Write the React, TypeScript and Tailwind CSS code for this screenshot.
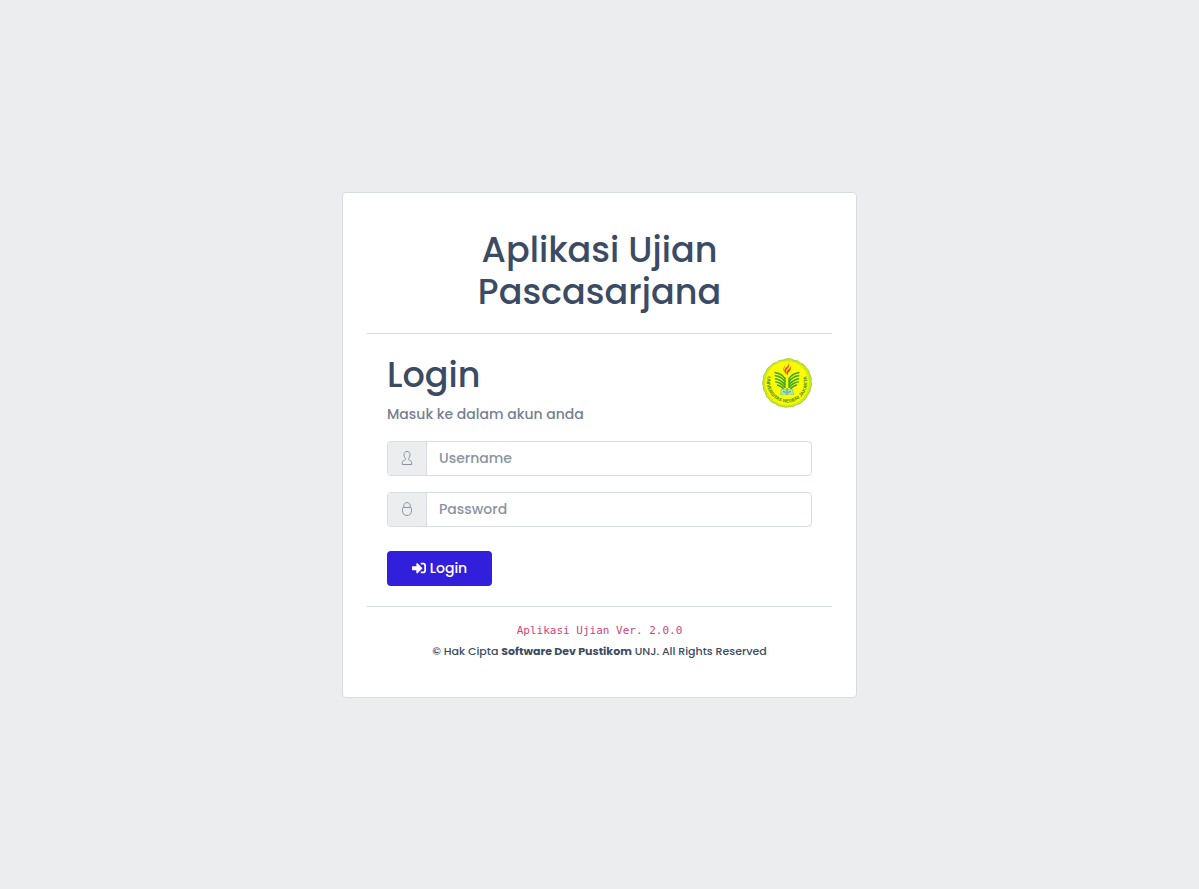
import type { ReactNode } from "react";
import { FaSignInAlt } from "react-icons/fa";

function UserIcon() {
  return (
    <svg width="14" height="14" viewBox="0 0 14 14" fill="none" stroke="currentColor" strokeLinejoin="round" aria-hidden="true">
      <path d="M7 .5C5.100.5 4 1.700 4 3.700c0 1.700.6 2.900 1.500 3.700v.9c0 .7-.7.900-1.500 1.200-1.100.5-1.700 1.100-1.700 2.300v1.700h9.400v-1.700c0-1.200-.6-1.800-1.700-2.300-.8-.3-1.500-.5-1.500-1.200v-.9C9.400 6.600 10 5.400 10 3.700 10 1.700 8.900.5 7 .5Z" />
    </svg>
  );
}

function LockIcon() {
  return (
    <svg width="14" height="14" viewBox="0 0 14 14" fill="none" stroke="currentColor" strokeLinejoin="round" aria-hidden="true">
      <path d="M3.500 5.500h7c.6 0 1 .4 1 1v2.200c0 2.900-1.800 4.800-4.500 4.800s-4.500-1.900-4.500-4.800V6.500c0-.6.4-1 1-1Z" />
      <path d="M3.800 5.500V3.900C3.800 1.900 5.100.5 7 .5s3.200 1.400 3.200 3.400v1.600" />
    </svg>
  );
}

function Pages() {
  return (
    <>
      <path d="M12.500 14.500Q20 15.500 22.700 20.500" />
      <path d="M12.700 17.600Q20 18.600 22.900 24" />
      <path d="M12.900 20.700Q19.500 21.600 22.900 27" />
      <path d="M13.200 23.800Q19 24.500 22.600 29.500" />
      <path d="M15 27Q19 27.600 21.500 31" />
      <path d="M22.900 19.500V30" />
    </>
  );
}

function Logo() {
  return (
    <svg viewBox="0 0 50 50" className="mt-1 size-[50px] shrink-0" role="img" aria-label="Universitas Negeri Jakarta">
      <path
        d="M25 .7Q29 .2 32 2.300Q36 2.300 38.600 5Q42.500 6 44 9.500Q47.500 12 47.500 16Q50 19.500 49 23.200Q50.300 27 48.400 30.500Q48.500 34.500 45.500 37.200Q44.500 41.200 41 42.800Q38.500 46.300 34.500 46.600Q31 49.500 27 48.800Q23.500 50 20 48.300Q16 48.500 13.200 45.500Q9 45 7.300 41.300Q3.800 39 3.600 35Q.8 32 1.300 28.200Q-.3 24.500 1.600 21Q1 17 3.800 14.200Q4.500 10 8.200 8.200Q10.500 4.800 14.500 4.500Q17.500 1.500 21.200 2Z"
        fill="#cfea1c"
        stroke="#a9d02c"
        strokeWidth="1"
      />
      <circle cx="25" cy="25" r="21.800" fill="#fbfb06" />
      <g fill="none" stroke="#3fa62d" strokeWidth="1.500">
        <Pages />
        <g transform="translate(50 0) scale(-1 1)">
          <Pages />
        </g>
      </g>
      <path d="M19.500 31.500Q22.500 30.500 25 32Q27.500 30.500 30.500 31.500L31.500 36.500Q27.500 35.300 25 36.800Q22.500 35.300 18.500 36.500Z" fill="#a9e8c8" stroke="#5fbfa0" strokeWidth=".6" />
      <path d="M25 30V36.500M21 33.500L24 34.300M26 34.300L29 33.500" stroke="#3a8fa0" strokeWidth=".9" />
      <path d="M26.500 4Q27.500 7 24 9.500Q20.500 12.500 24 16.500Q23 12.500 26 10Q28 7.500 26.500 4Z" fill="#ee4a1e" />
      <path d="M28.300 8Q30 12 26.500 14.200Q25.500 15.500 26 17.500Q22.500 14.500 26 12Q28.300 10.500 28.300 8Z" fill="#e94920" />
      <path d="M23 7.500Q20.500 10.500 22 13.500Q21.800 10.500 23 7.500Z" fill="#ee4a1e" />
      <path id="logo-ring" d="M6 17.500A20.200 20.200 0 1 0 44 17.500" fill="none" />
      <text fill="#3f8c22" fontSize="4.800" fontWeight="700" fontFamily="Liberation Sans, sans-serif">
        <textPath href="#logo-ring" startOffset="50%" textAnchor="middle">
          UNIVERSITAS NEGERI JAKARTA
        </textPath>
      </text>
    </svg>
  );
}

type FieldProps = {
  id: string;
  label: string;
  type: string;
  icon: ReactNode;
};

function Field({ id, label, type, icon }: FieldProps) {
  return (
    <div className="flex h-[35px] overflow-hidden rounded border border-[#d8dbe0] bg-white">
      <label htmlFor={id} aria-label={label} className="flex w-[39px] shrink-0 items-center justify-center border-r border-[#d8dbe0] bg-[#ebedef] text-[#8a93a2]">
        {icon}
      </label>
      <input
        id={id}
        type={type}
        placeholder={label}
        className="min-w-0 flex-1 px-3 text-sm font-medium text-[#768192] outline-none placeholder:text-[#8a93a2]"
      />
    </div>
  );
}

export default function App() {
  return (
    <main className="flex min-h-screen items-center justify-center bg-[#ebedef] px-4 font-['Poppins','Inter',sans-serif] text-sm text-[#3c4b64]">
      <section className="w-full max-w-[515px] rounded border border-[#d8dbe0] bg-white px-6 pt-9 pb-[35px]">
        <h1 className="px-5 text-center text-[35px] leading-[42px] font-medium">Aplikasi Ujian Pascasarjana</h1>
        <form className="mt-5 border-y border-[#d8dbe0] p-5" onSubmit={(event) => event.preventDefault()}>
          <div className="flex items-start justify-between">
            <div>
              <h2 className="text-[35px] leading-[42px] font-medium">Login</h2>
              <p className="mt-2 leading-[21px] font-medium text-[#768192]">Masuk ke dalam akun anda</p>
            </div>
            <Logo />
          </div>
          <div className="mt-4 flex flex-col gap-4">
            <Field id="username" label="Username" type="text" icon={<UserIcon />} />
            <Field id="password" label="Password" type="password" icon={<LockIcon />} />
          </div>
          <button type="submit" className="mt-6 flex h-[35px] w-[105px] items-center justify-center gap-1 rounded bg-[#321fdb] font-medium text-white">
            <FaSignInAlt size={14} aria-hidden="true" />
            Login
          </button>
        </form>
        <footer className="mt-[13px] text-center text-[11px] leading-[21px] font-medium">
          <code className="block font-['DejaVu_Sans_Mono',monospace] font-normal text-[#d63f7c]">Aplikasi Ujian Ver. 2.0.0</code>
          <p>
            © Hak Cipta <strong className="font-bold">Software Dev Pustikom</strong> UNJ. All Rights Reserved
          </p>
        </footer>
      </section>
    </main>
  );
}
